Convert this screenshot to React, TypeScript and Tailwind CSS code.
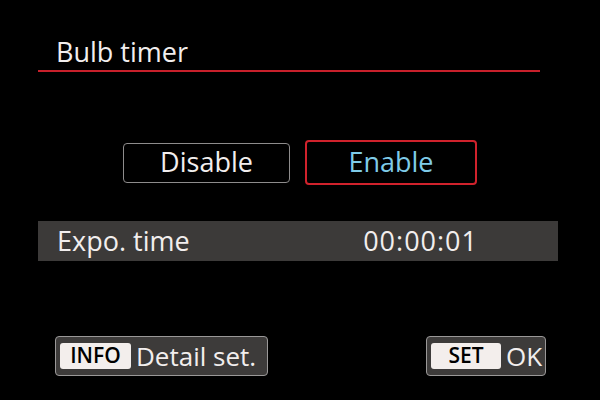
export default function App() {
  return (
    <div className="flex h-[400px] w-[600px] flex-col bg-black font-['Open_Sans',sans-serif] text-[#f2eeee]">
      <div className="pl-[56px] pt-[35px] text-[27px] leading-[34px]">Bulb timer</div>
      <div className="ml-[38px] mt-[1px] h-[2px] w-[502px] bg-[#c8202b]" />

      <div className="ml-[123px] mt-[68px] flex items-center gap-[15px]">
        <div className="flex h-[40px] w-[167px] items-center justify-center rounded-[4px] border border-[#8e8c8c] text-[27px]">
          Disable
        </div>
        <div className="flex h-[45px] w-[172px] items-center justify-center rounded-[4px] border-2 border-[#d0222c] text-[27px] text-[#7fcbe8]">
          Enable
        </div>
      </div>

      <div className="ml-[38px] mt-[36px] flex h-[40px] w-[520px] items-center justify-between bg-[#3c3a39] pl-[19px] pr-[80px] text-[27px]">
        <span>Expo. time</span>
        <span className="tracking-[1px]">00:00:01</span>
      </div>

      <div className="mt-[75px] flex items-center justify-between pl-[55px] pr-[54px]">
        <div className="flex h-[40px] w-[213px] items-center gap-[5px] rounded-[4px] border border-[#9a9898] bg-[#3d3b3a] pl-[4px]">
          <span className="flex h-[26px] w-[71px] items-center justify-center rounded-[3px] bg-[#f3eeec] text-[21px] font-semibold text-black">
            INFO
          </span>
          <span className="text-[26px]">Detail set.</span>
        </div>
        <div className="flex h-[40px] w-[120px] items-center gap-[5px] rounded-[4px] border border-[#9a9898] bg-[#3d3b3a] pl-[4px]">
          <span className="flex h-[26px] w-[70px] items-center justify-center rounded-[3px] bg-[#f3eeec] text-[21px] font-semibold text-black">
            SET
          </span>
          <span className="text-[26px]">OK</span>
        </div>
      </div>
    </div>
  )
}
